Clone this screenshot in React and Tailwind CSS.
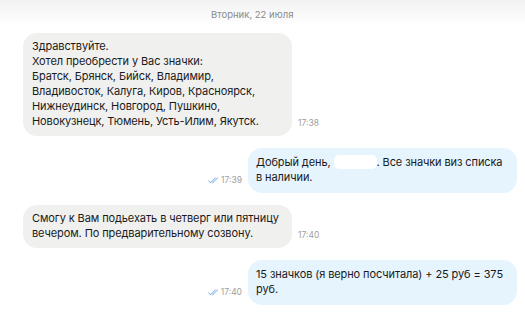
import React from "react";

function DoubleCheck() {
  return (
    <svg width="11" height="7" viewBox="0 0 11 7" fill="none" className="shrink-0">
      <path d="M0.6 3.8 L2.6 5.8 L7.2 0.9" stroke="#5b9be0" strokeWidth="0.9" strokeLinecap="round" strokeLinejoin="round" />
      <path d="M4.4 5.6 L4.6 5.8 L9.6 0.9" stroke="#5b9be0" strokeWidth="0.9" strokeLinecap="round" strokeLinejoin="round" />
    </svg>
  );
}

function Incoming({ children, time, className = "" }) {
  return (
    <div className={"flex items-end pl-[23px] " + className}>
      <div className="w-[269px] rounded-[14px] bg-[#f0f0ef] pl-[9px] pr-[8px] pt-[6px] pb-[7px] text-[#1a1a1a]">
        {children}
      </div>
      <span className="ml-[6px] mb-[8px] text-[8.5px] leading-[10px] tracking-normal text-[#a0a0a0]">{time}</span>
    </div>
  );
}

function Outgoing({ children, time, className = "" }) {
  return (
    <div className={"flex items-end justify-end pr-[8px] " + className}>
      <div className="mr-[6px] mb-[8px] flex items-center gap-[2px]">
        <DoubleCheck />
        <span className="text-[8.5px] leading-[10px] tracking-normal text-[#a0a0a0]">{time}</span>
      </div>
      <div className="w-[269px] rounded-[14px] bg-[#e6f4fd] pl-[8px] pr-[8px] pt-[7px] pb-[8px] text-[#1a1a1a]">
        {children}
      </div>
    </div>
  );
}

export default function App() {
  return (
    <div
      className="relative h-[312px] w-[525px] overflow-hidden bg-white text-[11px] leading-[15px] tracking-[-0.1px]"
      style={{ fontFamily: "Inter, 'Noto Sans', sans-serif" }}
    >
      <div className="absolute left-0 right-0 top-0 h-[26px] bg-gradient-to-b from-[#f2f2f2] to-white" />
      <div className="relative flex flex-col">
        <div className="flex h-[27px] items-center pl-[211px] pt-[1px] text-[9.5px] tracking-normal text-[#8a8a8a]">
          Вторник, 22 июля
        </div>
        <Incoming time="17:38" className="mt-[6px]">
          Здравствуйте.
          <br />
          Хотел преобрести у Вас значки:
          <br />
          Братск, Брянск, Бийск, Владимир,
          <br />
          Владивосток, Калуга, Киров, Красноярск,
          <br />
          Нижнеудинск, Новгород, Пушкино,
          <br />
          Новокузнецк, Тюмень, Усть-Илим, Якутск.
        </Incoming>
        <Outgoing time="17:39" className="mt-[12px]">
          Добрый день,{" "}
          <span className="inline-block h-[14px] w-[43px] rounded-[5px] bg-white align-[-3px]" />
          . Все значки виз списка
          <br />
          в наличии.
        </Outgoing>
        <Incoming time="17:40" className="mt-[12px]">
          Смогу к Вам подьехать в четверг или пятницу
          <br />
          вечером. По предварительному созвону.
        </Incoming>
        <Outgoing time="17:40" className="mt-[12px]">
          15 значков (я верно посчитала) + 25 руб = 375
          <br />
          руб.
        </Outgoing>
      </div>
    </div>
  );
}
